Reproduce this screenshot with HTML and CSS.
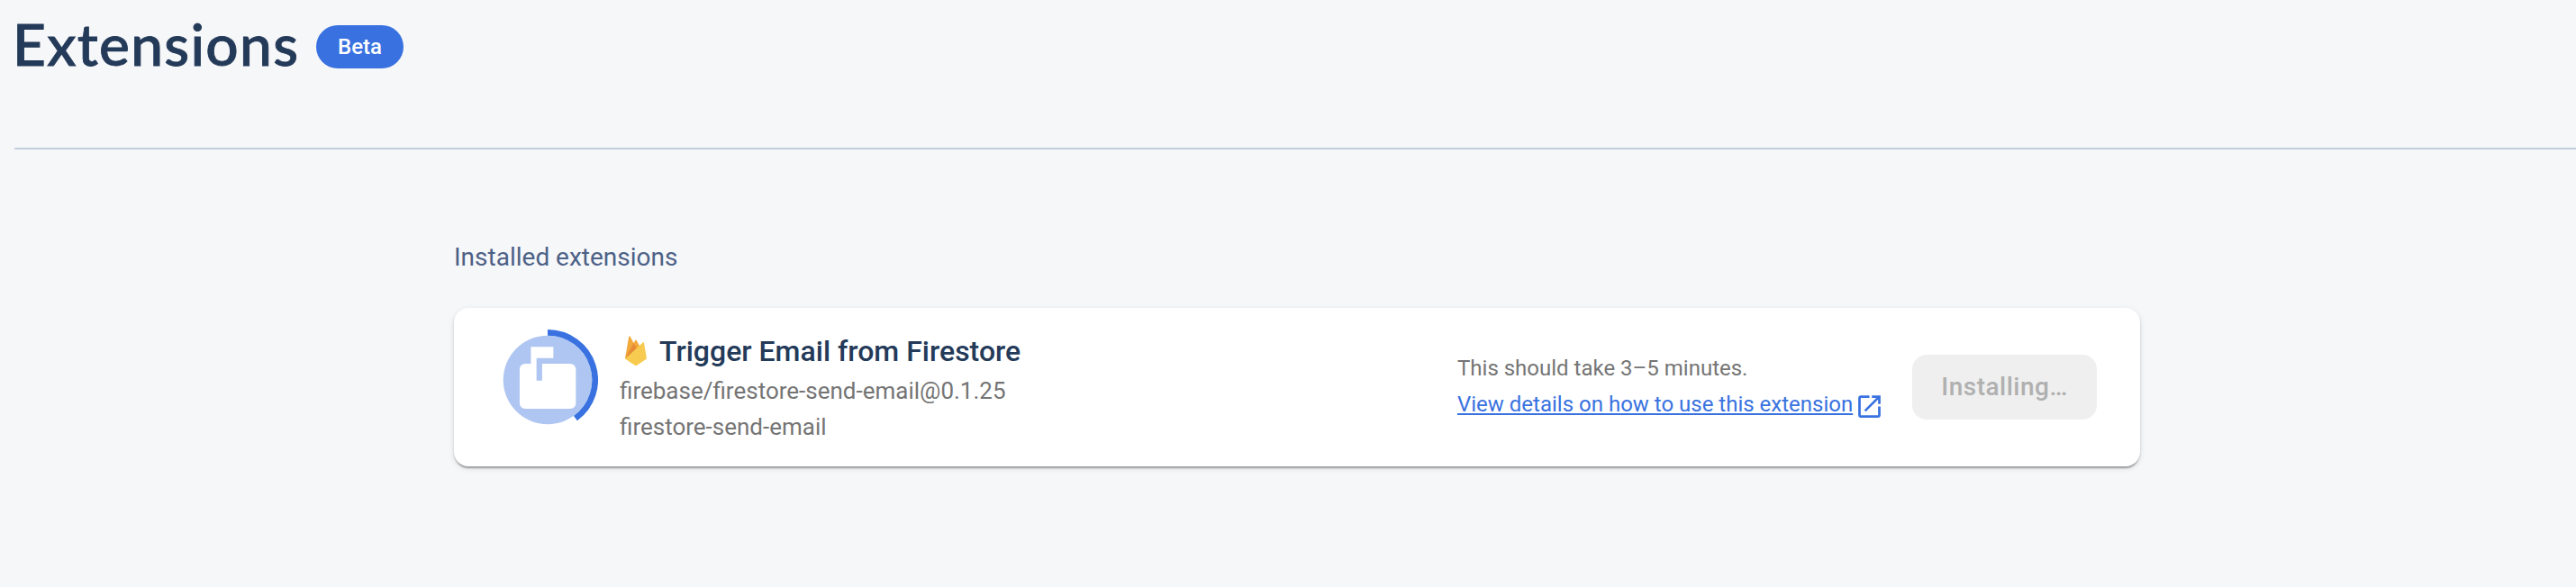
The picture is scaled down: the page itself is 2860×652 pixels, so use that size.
FILE: index.html
```html
<!DOCTYPE html>
<html lang="en">
<head>
<meta charset="utf-8">
<title>Extensions</title>
<link rel="stylesheet" href="styles.css">
</head>
<body>
<header class="page-header">
  <h1 class="page-title">Extensions</h1>
  <span class="badge">Beta</span>
</header>
<main class="content">
  <h2 class="section-title">Installed extensions</h2>
  <article class="card">
    <svg class="progress" viewBox="0 0 112 112" aria-hidden="true">
      <circle class="disc" cx="56" cy="56" r="49.3"/>
      <path class="arc" d="M56 3.35A52.65 52.65 0 0 1 86.95 98.6"/>
      <path class="mailbox" transform="translate(18.7 19.3) scale(3.12)" d="M20 6H10v6H8V4h6V0H6v6H4c-1.1 0-2 .9-2 2v12c0 1.1.9 2 2 2h16c1.1 0 2-.9 2-2V8c0-1.1-.9-2-2-2z"/>
    </svg>
    <div class="info">
      <h3 class="name">
        <svg class="firebase" viewBox="0 0 24 34" aria-hidden="true">
          <path fill="#f2a93c" d="M0 25.5 4.2.8Q4.8-.4 5.6.8L9.6 8 11.300 4.900Q12 4 12.700 4.900L17 13z"/>
          <path fill="#e78a37" d="M0 25.500 9.600 8 14 16z"/>
          <path fill="#f7cb4f" d="M0 25.500 19.700 7.400Q20.700 6.600 21 7.800L24 25.500 13.200 32.700Q12 33.500 10.800 32.700z"/>
        </svg>
        <span class="name-text">Trigger Email from Firestore</span>
      </h3>
      <p class="ref">firebase/firestore-send-email@0.1.25</p>
      <p class="ref instance">firestore-send-email</p>
    </div>
    <div class="status">
      <p class="eta">This should take 3–5 minutes.</p>
      <a class="details" href="#"><span class="details-text">View details on how to use this extension</span><svg class="external" viewBox="0 0 24 24" aria-hidden="true"><path d="M19 19H5V5h7V3H5c-1.110 0-2 .9-2 2v14c0 1.100.89 2 2 2h14c1.100 0 2-.9 2-2v-7h-2v7zM14 3v2h3.590l-9.830 9.830 1.410 1.410L19 6.410V10h2V3h-7z"/></svg></a>
    </div>
    <button class="action" disabled>Installing…</button>
  </article>
</main>
</body>
</html>
```
FILE: styles.css
```css
* { box-sizing: border-box; }
body {
  margin: 0;
  height: 652px;
  background: #f6f7f9;
  font-family: Roboto, sans-serif;
  overflow: hidden;
}
h1, h2, h3, p { margin: 0; font-weight: 400; }
.page-header {
  display: flex;
  align-items: flex-start;
  height: 166px;
  margin-left: 16px;
  border-bottom: 2px solid #c3cfdd;
}
.page-title {
  width: 337px;
  margin-left: -2px;
  padding-top: 11px;
  font: 500 64px/76px Lato, sans-serif;
  letter-spacing: 1.3px;
  color: #243a59;
  -webkit-text-stroke: .9px #243a59;
  white-space: nowrap;
}
.badge {
  width: 97px;
  height: 48px;
  margin-top: 28px;
  border-radius: 24px;
  background: #3972e0;
  color: #fff;
  font-size: 24px;
  font-weight: 500;
  line-height: 48px;
  text-align: center;
}
.content { width: 1872px; margin: 100px 0 0 504px; }
.section-title {
  height: 76px;
  font-size: 28px;
  line-height: 39px;
  color: #4d6186;
}
.card {
  display: flex;
  align-items: flex-start;
  height: 176px;
  padding: 24px 48px 0 48px;
  border-radius: 16px;
  background: #fff;
  box-shadow: 0 4px 2px -2px rgba(0,0,0,.2), 0 2px 2px rgba(0,0,0,.14), 0 2px 6px rgba(0,0,0,.12);
}
.progress { flex: none; width: 112px; height: 112px; }
.disc { fill: #afc6f2; }
.arc { fill: none; stroke: #3972e0; stroke-width: 6.7; }
.mailbox { fill: #fff; }
.info { width: 930px; margin-left: 24px; }
.name {
  display: flex;
  align-items: flex-start;
  height: 48px;
  padding-left: 6px;
}
.firebase { width: 24px; height: 34px; margin-top: 7px; }
.name-text {
  margin-left: 14px;
  font-size: 32px;
  font-weight: 500;
  line-height: 48px;
  color: #243a59;
}
.ref {
  font-size: 26px;
  line-height: 40px;
  color: #757575;
}
.status { width: 505px; padding-top: 23px; }
.eta, .details {
  font-size: 24px;
  line-height: 40px;
}
.eta { color: #757575; }
.details {
  display: flex;
  color: #3972e0;
  text-decoration: none;
}
.details-text {
  text-decoration: underline;
  text-decoration-thickness: 2px;
  text-underline-offset: 2px;
  text-decoration-skip-ink: none;
  white-space: nowrap;
}
.external { flex: none; width: 33px; height: 33px; margin: 6px 0 0 2px; fill: #3972e0; }
.action {
  width: 205px;
  height: 72px;
  margin-top: 28px;
  padding: 0;
  border: 0;
  border-radius: 16px;
  background: #efefef;
  color: #b0b0b0;
  font: 500 28px/72px Roboto, sans-serif;
  letter-spacing: .5px;
}
```
